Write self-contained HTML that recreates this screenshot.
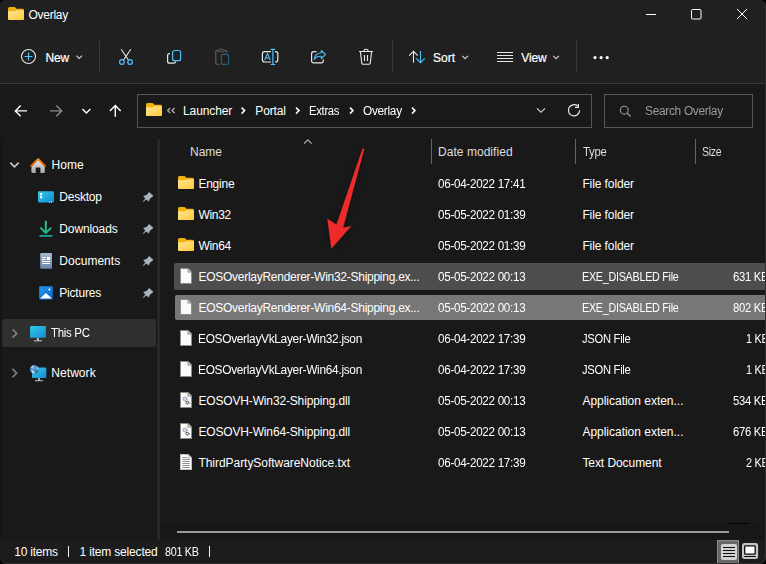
<!DOCTYPE html>
<html><head><meta charset="utf-8">
<style>
*{box-sizing:border-box;margin:0;padding:0}
html,body{width:766px;height:564px;overflow:hidden;background:#000}
body{position:relative;font-family:"Liberation Sans",sans-serif;font-size:12px;color:#fff}
#win{position:absolute;left:0;top:0;width:766px;height:564px;background:#191919;border-radius:5px 6px 7px 6px;overflow:hidden}
#edge{position:absolute;left:0;top:0;width:766px;height:564px;border-radius:5px 6px 7px 6px;box-shadow:inset -1px -1px 0 #2e2e2e}
.t{position:absolute;white-space:nowrap;line-height:16px;height:16px}
#top{position:absolute;left:0;top:0;width:766px;height:83px;background:#202020}
#topline{position:absolute;left:0;top:83px;width:766px;height:1px;background:#383838}
#sidediv{position:absolute;left:157px;top:139px;width:3px;height:401px;background:linear-gradient(90deg,#1e1e1e,#2b2b2b 50%,#242424)}
#status{position:absolute;left:0;top:540px;width:766px;height:24px;background:#1c1c1c}
.sep{position:absolute;width:1px;background:#3a3a3a}
.box{position:absolute;border:1px solid #575757;background:#191919}
.rowsel{position:absolute;border-radius:2px}
#ov{position:absolute;left:0;top:0;width:766px;height:564px;overflow:visible}
</style></head><body><div id="win">
<div id="top"></div><div id="topline"></div>
<div id="sidediv"></div>
<div id="status"></div>
<!-- toolbar separators -->
<div class="sep" style="left:99px;top:41px;height:32px"></div>
<div class="sep" style="left:392px;top:41px;height:32px"></div>
<div class="sep" style="left:576px;top:41px;height:32px"></div>
<!-- address + search boxes -->
<div class="box" style="left:137px;top:94px;width:455px;height:34px"></div>
<div class="box" style="left:604px;top:94px;width:149px;height:34px"></div>
<!-- column separators -->
<div class="sep" style="left:431px;top:139px;height:25px;background:#636363"></div>
<div class="sep" style="left:575px;top:139px;height:25px;background:#636363"></div>
<div class="sep" style="left:695px;top:139px;height:25px;background:#636363"></div>
<!-- this pc row -->
<div class="rowsel" style="left:2px;top:319px;width:154px;height:27.5px;background:#2f2f2f;border-radius:2px"></div>
<!-- selected rows -->
<div class="rowsel" style="left:174px;top:263px;width:600px;height:27px;background:#4d4d4d"></div>
<div class="rowsel" style="left:175px;top:295px;width:600px;height:25px;background:#777"></div>
<!-- scrollbar -->
<div style="position:absolute;left:160px;top:523px;width:606px;height:17px;background:#171717"></div>
<div style="position:absolute;left:177px;top:531px;width:552px;height:2px;background:#9a9a9a"></div>
<div style="position:absolute;left:729px;top:523px;width:19px;height:1px;background:#000"></div>
<!-- status separators -->
<div style="position:absolute;left:68px;top:545.5px;width:1.3px;height:11.5px;background:#f0f0f0"></div>
<div style="position:absolute;left:209px;top:545.5px;width:1.3px;height:11.5px;background:#f0f0f0"></div>
<div style="position:absolute;left:0;top:139px;width:2px;height:401px;background:#151515"></div>
<!-- view buttons -->
<div style="position:absolute;left:717px;top:540px;width:22px;height:25px;background:#686868;border:1px solid #8a8a8a"></div>
<svg id="ov" viewBox="0 0 766 564" fill="none">
<defs>
<linearGradient id="fg" x1="0" y1="0" x2="1" y2="1"><stop offset="0" stop-color="#ffe69a"/><stop offset="1" stop-color="#ffc83a"/></linearGradient>
<symbol id="folder" viewBox="0 0 16 13" overflow="visible">
<path d="M0 1.5Q0 0 1.5 0H6.3Q7 0 7.4 .5L8.3 1.7H14.5Q16 1.7 16 3.2V11.5Q16 13 14.5 13H1.5Q0 13 0 11.5Z" fill="#f2b00d"/>
<path d="M0 4.2H6.8Q7.3 4.2 7.7 3.8L8.3 3.2H16V11.5Q16 13 14.5 13H1.5Q0 13 0 11.5Z" fill="url(#fg)"/>
</symbol>
<symbol id="file" viewBox="0 0 12 16" overflow="visible">
<path d="M0 0H8.4L12 3.6V16H0Z" fill="#8e8a86"/>
<path d="M1 1H7.6V4.4H11V15H1Z" fill="#fbfbfb"/>
<path d="M8.6 1.6L10.4 3.4H8.6Z" fill="#fbfbfb"/>
</symbol>
<symbol id="dll" viewBox="0 0 12 16" overflow="visible">
<path d="M0 0H8.4L12 3.6V16H0Z" fill="#8e8a86"/>
<path d="M1 1H7.6V4.4H11V15H1Z" fill="#fbfbfb"/>
<path d="M8.6 1.6L10.4 3.4H8.6Z" fill="#fbfbfb"/>
<circle cx="5" cy="7" r="1.9" stroke="#a9b5c6" stroke-width="1.7" stroke-dasharray="1.1 .9"/>
<circle cx="5" cy="7" r="1.5" stroke="#a9b5c6" stroke-width="1.2" fill="#e8edf2"/>
<circle cx="7.5" cy="10.6" r="1.5" stroke="#596069" stroke-width="1.3" stroke-dasharray=".9 .7"/>
<circle cx="7.5" cy="10.6" r="1.1" stroke="#596069" stroke-width=".9" fill="#fff"/>
</symbol>
<symbol id="txt" viewBox="0 0 12 16" overflow="visible">
<path d="M0 0H8.4L12 3.6V16H0Z" fill="#bdbdbd"/>
<path d="M1 1H7.6V4.4H11V15H1Z" fill="#fdfdfd"/>
<path d="M8.6 1.6L10.4 3.4H8.6Z" fill="#fdfdfd"/>
<path d="M2.2 3.5H6.8M2.2 5.5H9.8M2.2 7.5H9.8M2.2 9.5H9.8M2.2 11.5H9.8M2.2 13.5H9.8" stroke="#8f8f8f" stroke-width="1"/>
</symbol>
<symbol id="pin" viewBox="0 0 12 12" overflow="visible">
<path d="M6.9 0.9L11.2 4.8L7.6 7.9L6.5 10.6L4.2 8.5L0.9 11L0.6 10.6L3.1 7.6L1 5.2L4.9 3.4Z" fill="#a7b2b9"/>
</symbol>
<linearGradient id="mon" x1="0" y1="0" x2="1" y2="1"><stop offset="0" stop-color="#32cdea"/><stop offset="1" stop-color="#1488cf"/></linearGradient>
<linearGradient id="dl" x1="0" y1="0" x2="0" y2="1"><stop offset="0" stop-color="#35d782"/><stop offset="1" stop-color="#17a593"/></linearGradient>
<linearGradient id="doc" x1="0" y1="0" x2="0" y2="1"><stop offset="0" stop-color="#a9b8cf"/><stop offset="1" stop-color="#6b83a9"/></linearGradient>
<linearGradient id="pic" x1="0" y1="0" x2="1" y2="1"><stop offset="0" stop-color="#2598ee"/><stop offset="1" stop-color="#0b68cc"/></linearGradient>
<linearGradient id="roof" x1="0" y1="0" x2="0" y2="1"><stop offset="0" stop-color="#ff8f1f"/><stop offset="1" stop-color="#d85a00"/></linearGradient>
<linearGradient id="house" x1="0" y1="0" x2="0" y2="1"><stop offset="0" stop-color="#e4e4e4"/><stop offset="1" stop-color="#a8a8a8"/></linearGradient>
<filter id="sh" x="-60%" y="-20%" width="220%" height="140%"><feGaussianBlur in="SourceAlpha" stdDeviation="4"/><feComponentTransfer><feFuncA type="linear" slope=".35"/></feComponentTransfer><feMerge><feMergeNode/><feMergeNode in="SourceGraphic"/></feMerge></filter>
<radialGradient id="globe" cx=".4" cy=".35" r=".7"><stop offset="0" stop-color="#62aee2"/><stop offset="1" stop-color="#2769aa"/></radialGradient>
</defs>

<!-- title bar -->
<use href="#folder" x="8" y="7" width="16" height="13"/>
<g stroke="#fff" stroke-width="1">
<path d="M646 14.5H656"/>
<rect x="691.5" y="9.5" width="9.5" height="9.5" rx="1"/>
<path d="M737 9L747 19M747 9L737 19"/>
</g>

<!-- New -->
<circle cx="28.5" cy="56.5" r="7" stroke="#e8e8e8" stroke-width="1.1"/>
<path d="M28.5 52.5V60.5M24.5 56.5H32.5" stroke="#4cc2ff" stroke-width="1.2"/>
<path d="M76.3 55.6L79.2 58.5L82.1 55.6" stroke="#ccc" stroke-width="1.2"/>
<!-- cut -->
<path d="M121.2 49.3L128.6 60.2M130.8 49.3L123.4 60.2" stroke="#e8e8e8" stroke-width="1.1"/>
<circle cx="121.9" cy="62" r="2.3" stroke="#4cc2ff" stroke-width="1.2"/>
<circle cx="130.1" cy="62" r="2.3" stroke="#4cc2ff" stroke-width="1.2"/>
<!-- copy -->
<path d="M170 53.6H169.6Q167.6 53.6 167.6 55.6V61.2Q167.6 63.2 169.6 63.2H173.6Q175.6 63.2 175.6 61.6" stroke="#e8e8e8" stroke-width="1.2"/>
<rect x="172.6" y="50.5" width="8" height="10.2" rx="2" stroke="#4cc2ff" stroke-width="1.2"/>
<!-- paste (disabled) -->
<path d="M219.6 64.3H217Q215.8 64.3 215.8 63.1V51.8Q215.8 50.6 217 50.6H225.6Q226.8 50.6 226.8 51.8V53" stroke="#606060" stroke-width="1.1"/>
<rect x="218.6" y="49.3" width="5.4" height="2.4" rx="1.2" fill="#202020" stroke="#606060" stroke-width="1"/>
<rect x="221.3" y="54.4" width="7.3" height="10" rx="1.3" stroke="#27627f" stroke-width="1.1"/>
<!-- rename -->
<path d="M271 51.6H264.6Q262.4 51.6 262.4 53.8V59.8Q262.4 62 264.6 62H271M275 51.6H275.6Q277.8 51.6 277.8 53.8V59.8Q277.8 62 275.6 62H275" stroke="#e8e8e8" stroke-width="1.2"/>
<path d="M272.9 49.5V64.4M270.6 49.4H275.2M270.6 64.5H275.2" stroke="#4cc2ff" stroke-width="1.2"/>
<path d="M264.7 60L267.5 53.6L270.3 60M265.6 58H269.4" stroke="#4cc2ff" stroke-width="1.1"/>
<!-- share -->
<path d="M316.5 51.6H313.7Q311.6 51.6 311.6 53.7V60.7Q311.6 62.8 313.7 62.8H321.2Q323.3 62.8 323.3 60.7V59.6" stroke="#e8e8e8" stroke-width="1.2"/>
<path d="M321.3 50.5L325.4 54.5L321.3 58.6V56.3Q316.6 56 314.2 59.4Q314.8 53.4 321.3 52.8Z" stroke="#4cc2ff" stroke-width="1.1" stroke-linejoin="round"/>
<!-- delete -->
<path d="M359 51.5H373M363.8 51.3Q363.8 49.3 366 49.3Q368.2 49.3 368.2 51.3M360.4 51.6L361.7 62.8Q361.9 64.2 363.3 64.2H368.7Q370.1 64.2 370.3 62.8L371.6 51.6M364.5 55V61M367.5 55V61" stroke="#e8e8e8" stroke-width="1.1"/>
<!-- sort -->
<path d="M413.5 62.8V51.3M409.2 55.6L413.5 51.3L417.8 55.6" stroke="#e8e8e8" stroke-width="1.1"/>
<path d="M420.5 51V62.6M416.2 58.3L420.5 62.6L424.8 58.3" stroke="#4cc2ff" stroke-width="1.1"/>
<path d="M462.3 55.8L465.1 58.6L467.9 55.8" stroke="#ccc" stroke-width="1.2"/>
<!-- view -->
<path d="M497 52.5H513M497 55.5H513M497 58.5H513M497 61.5H513" stroke="#e8e8e8" stroke-width="1"/>
<path d="M553.3 55.8L556.1 58.6L558.9 55.8" stroke="#ccc" stroke-width="1.2"/>
<!-- dots -->
<g fill="#fff"><circle cx="595" cy="57.6" r="1.55"/><circle cx="601.1" cy="57.6" r="1.55"/><circle cx="607.2" cy="57.6" r="1.55"/></g>

<!-- nav arrows -->
<path d="M27 110.9H15.5M20.7 105.5L15.3 110.9L20.7 116.3" stroke="#fff" stroke-width="1.4"/>
<path d="M50 110.9H61.5M56.3 105.5L61.7 110.9L56.3 116.3" stroke="#8a8a8a" stroke-width="1.4"/>
<path d="M82.4 109L86.4 113L90.4 109" stroke="#fff" stroke-width="1.4"/>
<path d="M115.3 116.8V105.8M109.9 111L115.3 105.6L120.7 111" stroke="#fff" stroke-width="1.4"/>
<!-- address bar -->
<use href="#folder" x="146" y="103" width="16" height="13"/>
<path d="M170.3 107.8L167.6 110.5L170.3 113.2M174.6 107.8L171.9 110.5L174.6 113.2" stroke="#b8b8b8" stroke-width="1.2"/>
<g stroke="#fff" stroke-width="1.5">
<path d="M241.6 107.6L244.6 110.6L241.6 113.6"/>
<path d="M296 107.6L299 110.6L296 113.6"/>
<path d="M350 107.6L353 110.6L350 113.6"/>
<path d="M412 107.6L415 110.6L412 113.6"/>
</g>
<path d="M537 108.3L541 112.3L545 108.3" stroke="#e0e0e0" stroke-width="1.1"/>
<path d="M579.6 110.3A5.6 5.6 0 1 1 577.6 106" stroke="#e8e8e8" stroke-width="1.2"/>
<path d="M578.4 104V107.4H575" stroke="#e8e8e8" stroke-width="1.2"/>
<circle cx="624.3" cy="110.2" r="3.9" stroke="#9b9b9b" stroke-width="1.1"/>
<path d="M627.1 113L630.6 116.5" stroke="#9b9b9b" stroke-width="1.1"/>

<!-- sidebar -->
<path d="M10.3 162.6L14.5 166.8L18.7 162.6" stroke="#c8c8c8" stroke-width="1.6"/>
<path d="M31.4 166V171.8Q31.4 173 32.6 173H35.7V167.4H40.4V173H43.6Q44.8 173 44.8 171.8V166L38.1 159.8Z" fill="url(#house)"/>
<path d="M31.2 165.7L38.1 159.1L45 165.7" stroke="url(#roof)" stroke-width="2" stroke-linecap="round" stroke-linejoin="round"/>
<!-- desktop -->
<rect x="38" y="191.2" width="16" height="11.2" rx="1.3" fill="url(#mon)"/>
<rect x="40" y="193.2" width="2.2" height="2" fill="#fff"/><rect x="40" y="196.2" width="2.2" height="2" fill="#fff"/>
<rect x="49" y="201.6" width="1" height="1" fill="#fff"/><rect x="51" y="201.6" width="1" height="1" fill="#fff"/>
<use href="#pin" x="142.2" y="191" width="12" height="12"/>
<!-- downloads -->
<path d="M45.8 221.6V233M40.9 228.2L45.8 233.1L50.7 228.2M40.2 235.9H51.8" stroke="url(#dl)" stroke-width="1.9" stroke-linecap="round" stroke-linejoin="round"/>
<use href="#pin" x="142.2" y="223" width="12" height="12"/>
<!-- documents -->
<rect x="40.2" y="253.1" width="11.8" height="15.7" rx="1.1" fill="url(#doc)"/>
<path d="M42.2 257.5H45.6M42.2 259.5H45.6M42.2 261.5H50M42.2 263.5H50" stroke="#fff" stroke-width="1"/>
<rect x="47" y="257" width="3" height="3" fill="#fff"/>
<use href="#pin" x="142.2" y="255" width="12" height="12"/>
<!-- pictures -->
<rect x="39.2" y="286.2" width="13.6" height="13.4" rx="1.3" fill="url(#pic)"/>
<path d="M40.2 298.6L45.3 293.5Q45.9 292.9 46.5 293.5L51.9 298.6Z" fill="#fff"/>
<path d="M49.4 287.9L49.9 289L51 289.5L49.9 290L49.4 291.1L48.9 290L47.8 289.5L48.9 289Z" fill="#fff"/>
<use href="#pin" x="142.2" y="287" width="12" height="12"/>
<!-- this pc -->
<path d="M12.5 329.2L16.7 333.4L12.5 337.6" stroke="#828282" stroke-width="1.6"/>
<rect x="30.1" y="326.1" width="15.8" height="11.7" rx=".8" fill="url(#mon)"/>
<path d="M37.9 337.8V340.4" stroke="#c4c8cc" stroke-width="1.8"/><path d="M34 340.8H42" stroke="#c4c8cc" stroke-width="1"/>
<!-- network -->
<path d="M12.5 368.9L16.7 373.1L12.5 377.3" stroke="#828282" stroke-width="1.6"/>
<rect x="32" y="367.6" width="14.3" height="10.4" rx=".8" fill="url(#mon)"/>
<path d="M39 378V380.2" stroke="#c4c8cc" stroke-width="1.7"/><path d="M35 380.7H43" stroke="#c4c8cc" stroke-width="1"/>
<circle cx="34.3" cy="369.4" r="4.4" fill="url(#globe)"/>
<path d="M31 367.2Q32.4 365.6 34 365.5Q33.8 366.8 32.6 367.4Q31.8 368.4 31 367.2Z" fill="#d6ebfa"/>
<path d="M36.8 366.6Q38.4 367.8 38.5 369.8Q37.4 369.6 37 368.4Q36.4 367.4 36.8 366.6Z" fill="#d6ebfa"/>
<path d="M31 370.4Q32.6 370 33.6 371.2Q34.8 371.8 34.6 373.4Q32.4 373.6 31 370.4Z" fill="#d6ebfa"/>

<!-- header sort caret -->
<path d="M304 143.6L307.8 139.8L311.6 143.6" stroke="#b4b4b4" stroke-width="1.2"/>

<!-- folder/file icons -->
<use href="#folder" x="178" y="176" width="16" height="13"/>
<use href="#folder" x="178" y="207" width="16" height="13"/>
<use href="#folder" x="178" y="238" width="16" height="13"/>

<use href="#file" x="180" y="268" width="12" height="16"/>
<use href="#file" x="180" y="299" width="12" height="16"/>
<use href="#file" x="180" y="330" width="12" height="16"/>
<use href="#file" x="180" y="361" width="12" height="16"/>
<use href="#dll" x="180" y="392" width="12" height="16"/>
<use href="#dll" x="180" y="423" width="12" height="16"/>
<use href="#txt" x="180" y="454" width="12" height="16"/>
<!-- red arrow -->
<path d="M362.5 148.4L364.3 148.9L343.1 227.8L351.4 225.9L331.4 248.8L327.3 218.8L336.5 224.4Z" fill="#ee2b2b" filter="url(#sh)"/>

<!-- view buttons -->
<rect x="721" y="544" width="16" height="16" rx="2" fill="#d2d2d2"/>
<path d="M723 547.5H735M723 550.5H735M723 553.5H735M723 556.5H735" stroke="#0a0a0a" stroke-width="1"/>
<rect x="742" y="543" width="16.1" height="16" rx="2.5" fill="#c4c4c4"/>
<rect x="744.7" y="545.8" width="10.5" height="8.3" rx=".6" fill="#fff" stroke="#0a0a0a" stroke-width="1.3"/>
<path d="M744.3 556.5H755.8" stroke="#0a0a0a" stroke-width="1"/>
</svg>

<div class="t" style="left:28.5px;top:6.5px;color:#ffffff;letter-spacing:-0.263px;">Overlay</div>
<div class="t" style="left:45.5px;top:50.0px;color:#ffffff;letter-spacing:-0.172px;-webkit-text-stroke:.2px #fff;">New</div>
<div class="t" style="left:433.0px;top:50.0px;color:#ffffff;letter-spacing:-0.004px;-webkit-text-stroke:.2px #fff;">Sort</div>
<div class="t" style="left:521.3px;top:50.0px;color:#ffffff;letter-spacing:-0.149px;-webkit-text-stroke:.2px #fff;">View</div>
<div class="t" style="left:183.0px;top:102.7px;color:#ffffff;letter-spacing:-0.106px;">Launcher</div>
<div class="t" style="left:255.3px;top:102.7px;color:#ffffff;letter-spacing:-0.127px;">Portal</div>
<div class="t" style="left:309.4px;top:102.7px;color:#ffffff;letter-spacing:-0.300px;transform:scaleX(0.9374);transform-origin:0 50%;">Extras</div>
<div class="t" style="left:363.4px;top:102.7px;color:#ffffff;letter-spacing:-0.300px;transform:scaleX(0.9887);transform-origin:0 50%;">Overlay</div>
<div class="t" style="left:645.2px;top:102.7px;color:#9b9b9b;letter-spacing:-0.300px;transform:scaleX(0.9910);transform-origin:0 50%;">Search Overlay</div>
<div class="t" style="left:51.5px;top:156.6px;color:#ffffff;letter-spacing:0.096px;">Home</div>
<div class="t" style="left:59.3px;top:188.6px;color:#ffffff;letter-spacing:-0.247px;">Desktop</div>
<div class="t" style="left:59.3px;top:220.6px;color:#ffffff;letter-spacing:-0.119px;">Downloads</div>
<div class="t" style="left:59.3px;top:252.6px;color:#ffffff;letter-spacing:0.022px;">Documents</div>
<div class="t" style="left:59.3px;top:284.6px;color:#ffffff;letter-spacing:-0.207px;">Pictures</div>
<div class="t" style="left:51.3px;top:324.6px;color:#ffffff;letter-spacing:-0.300px;transform:scaleX(0.9510);transform-origin:0 50%;">This PC</div>
<div class="t" style="left:51.3px;top:364.6px;color:#ffffff;letter-spacing:0.055px;">Network</div>
<div class="t" style="left:190.0px;top:143.8px;color:#dedede;letter-spacing:-0.004px;">Name</div>
<div class="t" style="left:438.0px;top:143.8px;color:#dedede;letter-spacing:0.043px;">Date modified</div>
<div class="t" style="left:582.6px;top:143.8px;color:#dedede;letter-spacing:-0.300px;transform:scaleX(0.9430);transform-origin:0 50%;">Type</div>
<div class="t" style="left:702.3px;top:143.8px;color:#dedede;letter-spacing:-0.300px;transform:scaleX(0.8761);transform-origin:0 50%;">Size</div>
<div class="t" style="left:14.3px;top:543.7px;color:#ffffff;letter-spacing:-0.245px;">10 items</div>
<div class="t" style="left:79.5px;top:543.7px;color:#ffffff;letter-spacing:-0.175px;">1 item selected</div>
<div class="t" style="left:164.5px;top:543.7px;color:#ffffff;letter-spacing:-0.300px;transform:scaleX(0.8969);transform-origin:0 50%;">801 KB</div>
<div class="t" style="left:198.4px;top:175.6px;color:#ffffff;letter-spacing:-0.229px;">Engine</div>
<div class="t" style="left:438.0px;top:175.6px;color:#ffffff;letter-spacing:-0.300px;transform:scaleX(0.9717);transform-origin:0 50%;">06-04-2022 17:41</div>
<div class="t" style="left:582.4px;top:175.6px;color:#ffffff;letter-spacing:-0.099px;">File folder</div>
<div class="t" style="left:198.4px;top:206.6px;color:#ffffff;letter-spacing:-0.283px;">Win32</div>
<div class="t" style="left:438.0px;top:206.6px;color:#ffffff;letter-spacing:-0.300px;transform:scaleX(0.9717);transform-origin:0 50%;">05-05-2022 01:39</div>
<div class="t" style="left:582.4px;top:206.6px;color:#ffffff;letter-spacing:-0.099px;">File folder</div>
<div class="t" style="left:198.4px;top:237.6px;color:#ffffff;letter-spacing:-0.283px;">Win64</div>
<div class="t" style="left:438.0px;top:237.6px;color:#ffffff;letter-spacing:-0.300px;transform:scaleX(0.9717);transform-origin:0 50%;">05-05-2022 01:39</div>
<div class="t" style="left:582.4px;top:237.6px;color:#ffffff;letter-spacing:-0.099px;">File folder</div>
<div class="t" style="left:198.4px;top:268.6px;color:#ffffff;letter-spacing:-0.265px;">EOSOverlayRenderer-Win32-Shipping.ex...</div>
<div class="t" style="left:438.0px;top:268.6px;color:#ffffff;letter-spacing:-0.300px;transform:scaleX(0.9717);transform-origin:0 50%;">05-05-2022 00:13</div>
<div class="t" style="left:582.4px;top:268.6px;color:#ffffff;letter-spacing:-0.300px;transform:scaleX(0.8976);transform-origin:0 50%;">EXE_DISABLED File</div>
<div class="t" style="left:732.9px;top:268.6px;color:#ffffff;letter-spacing:-0.300px;transform:scaleX(0.9395);transform-origin:0 50%;">631 KB</div>
<div class="t" style="left:198.4px;top:299.6px;color:#ffffff;letter-spacing:-0.265px;">EOSOverlayRenderer-Win64-Shipping.ex...</div>
<div class="t" style="left:438.0px;top:299.6px;color:#ffffff;letter-spacing:-0.300px;transform:scaleX(0.9717);transform-origin:0 50%;">05-05-2022 00:13</div>
<div class="t" style="left:582.4px;top:299.6px;color:#ffffff;letter-spacing:-0.300px;transform:scaleX(0.8976);transform-origin:0 50%;">EXE_DISABLED File</div>
<div class="t" style="left:732.9px;top:299.6px;color:#ffffff;letter-spacing:-0.300px;transform:scaleX(0.9395);transform-origin:0 50%;">802 KB</div>
<div class="t" style="left:198.4px;top:330.6px;color:#ffffff;letter-spacing:-0.300px;transform:scaleX(0.9899);transform-origin:0 50%;">EOSOverlayVkLayer-Win32.json</div>
<div class="t" style="left:438.0px;top:330.6px;color:#ffffff;letter-spacing:-0.300px;transform:scaleX(0.9717);transform-origin:0 50%;">06-04-2022 17:39</div>
<div class="t" style="left:582.4px;top:330.6px;color:#ffffff;letter-spacing:-0.300px;transform:scaleX(0.9329);transform-origin:0 50%;">JSON File</div>
<div class="t" style="left:745.8px;top:330.6px;color:#ffffff;letter-spacing:-0.300px;transform:scaleX(0.9027);transform-origin:0 50%;">1 KB</div>
<div class="t" style="left:198.4px;top:361.6px;color:#ffffff;letter-spacing:-0.300px;transform:scaleX(0.9899);transform-origin:0 50%;">EOSOverlayVkLayer-Win64.json</div>
<div class="t" style="left:438.0px;top:361.6px;color:#ffffff;letter-spacing:-0.300px;transform:scaleX(0.9717);transform-origin:0 50%;">06-04-2022 17:39</div>
<div class="t" style="left:582.4px;top:361.6px;color:#ffffff;letter-spacing:-0.300px;transform:scaleX(0.9329);transform-origin:0 50%;">JSON File</div>
<div class="t" style="left:745.8px;top:361.6px;color:#ffffff;letter-spacing:-0.300px;transform:scaleX(0.9027);transform-origin:0 50%;">1 KB</div>
<div class="t" style="left:198.4px;top:392.6px;color:#ffffff;letter-spacing:-0.152px;">EOSOVH-Win32-Shipping.dll</div>
<div class="t" style="left:438.0px;top:392.6px;color:#ffffff;letter-spacing:-0.300px;transform:scaleX(0.9717);transform-origin:0 50%;">05-05-2022 00:13</div>
<div class="t" style="left:582.4px;top:392.6px;color:#ffffff;letter-spacing:-0.015px;">Application exten...</div>
<div class="t" style="left:732.9px;top:392.6px;color:#ffffff;letter-spacing:-0.300px;transform:scaleX(0.9395);transform-origin:0 50%;">534 KB</div>
<div class="t" style="left:198.4px;top:423.6px;color:#ffffff;letter-spacing:-0.152px;">EOSOVH-Win64-Shipping.dll</div>
<div class="t" style="left:438.0px;top:423.6px;color:#ffffff;letter-spacing:-0.300px;transform:scaleX(0.9717);transform-origin:0 50%;">05-05-2022 00:13</div>
<div class="t" style="left:582.4px;top:423.6px;color:#ffffff;letter-spacing:-0.015px;">Application exten...</div>
<div class="t" style="left:732.9px;top:423.6px;color:#ffffff;letter-spacing:-0.300px;transform:scaleX(0.9395);transform-origin:0 50%;">676 KB</div>
<div class="t" style="left:198.4px;top:454.6px;color:#ffffff;letter-spacing:-0.040px;">ThirdPartySoftwareNotice.txt</div>
<div class="t" style="left:438.0px;top:454.6px;color:#ffffff;letter-spacing:-0.300px;transform:scaleX(0.9717);transform-origin:0 50%;">06-04-2022 17:39</div>
<div class="t" style="left:582.4px;top:454.6px;color:#ffffff;letter-spacing:-0.065px;">Text Document</div>
<div class="t" style="left:745.8px;top:454.6px;color:#ffffff;letter-spacing:-0.300px;transform:scaleX(0.9027);transform-origin:0 50%;">2 KB</div>
<div id="edge"></div>
</div></body></html>
